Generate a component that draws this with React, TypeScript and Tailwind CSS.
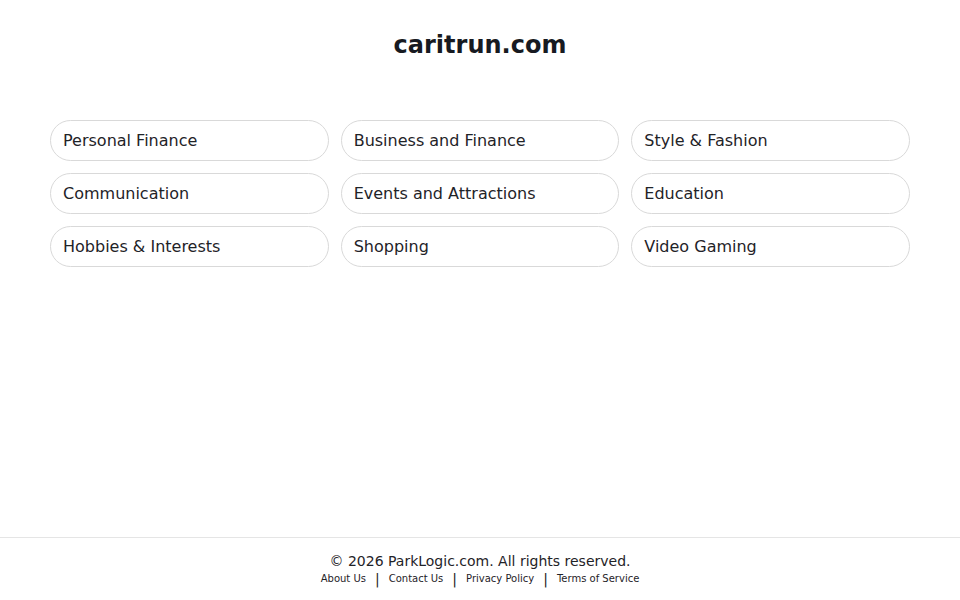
import React from 'react';

const categories = [
  'Personal Finance',
  'Business and Finance',
  'Style & Fashion',
  'Communication',
  'Events and Attractions',
  'Education',
  'Hobbies & Interests',
  'Shopping',
  'Video Gaming',
];

const links = ['About Us', 'Contact Us', 'Privacy Policy', 'Terms of Service'];

export default function App() {
  return (
    <div className="min-h-screen flex flex-col bg-white font-['DejaVu_Sans',sans-serif] text-[#1f2328]">
      <main className="flex-1 px-[50px]">
        <h1 className="pt-[29px] text-center text-[24px] leading-[32px] font-bold text-[#171a21]">
          caritrun.com
        </h1>
        <div className="mt-[59px] grid grid-cols-3 gap-x-[12px] gap-y-[12px]">
          {categories.map((c) => (
            <a
              key={c}
              href="#"
              className="flex h-[41px] items-center rounded-full border border-[#d9d9d9] px-[12px] pt-[1px] text-[16px] text-[#1f2328]"
            >
              {c}
            </a>
          ))}
        </div>
      </main>
      <footer className="h-[63px] border-t border-[#e5e5e5] pt-[13px] text-center">
        <p className="text-[14px] leading-[20px] text-[#1f2328]">© 2026 ParkLogic.com. All rights reserved.</p>
        <div className="mt-[1px] flex items-center justify-center text-[10px] leading-[14px] text-[#1f2328]">
          {links.map((l, i) => (
            <React.Fragment key={l}>
              {i > 0 && <span className="mx-[9px] text-[14px] leading-[14px]">|</span>}
              <a href="#">{l}</a>
            </React.Fragment>
          ))}
        </div>
      </footer>
    </div>
  );
}
